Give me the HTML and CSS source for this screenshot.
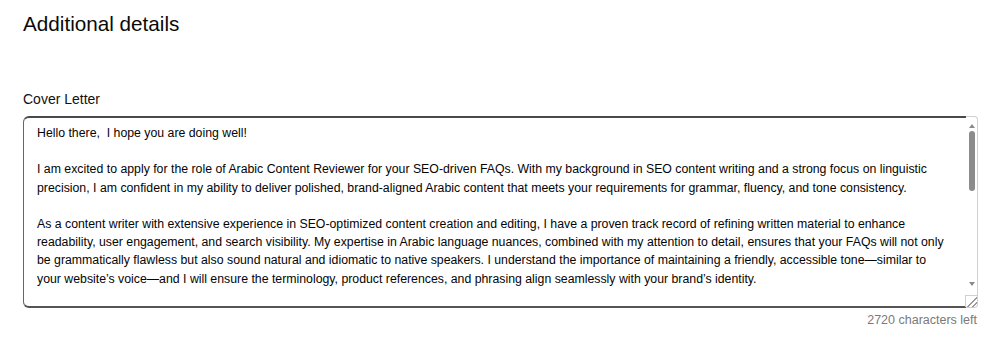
FILE: index.html
```html
<!DOCTYPE html>
<html lang="en">
<head>
<meta charset="UTF-8">
<title>Additional details</title>
<link rel="stylesheet" href="styles.css">
</head>
<body>
<section class="details">
  <h2>Additional details</h2>

  <label class="field-label" for="coverLetter">Cover Letter</label>
  <div class="editor">
    <textarea id="coverLetter" wrap="off">Hello there,  I hope you are doing well!

I am excited to apply for the role of Arabic Content Reviewer for your SEO-driven FAQs. With my background in SEO content writing and a strong focus on linguistic
precision, I am confident in my ability to deliver polished, brand-aligned Arabic content that meets your requirements for grammar, fluency, and tone consistency.

As a content writer with extensive experience in SEO-optimized content creation and editing, I have a proven track record of refining written material to enhance
readability, user engagement, and search visibility. My expertise in Arabic language nuances, combined with my attention to detail, ensures that your FAQs will not only
be grammatically flawless but also sound natural and idiomatic to native speakers. I understand the importance of maintaining a friendly, accessible tone—similar to
your website’s voice—and I will ensure the terminology, product references, and phrasing align seamlessly with your brand’s identity.

For this project, I will:
- Review and edit each FAQ for grammar, spelling, and punctuation
- Improve sentence flow and readability
- Keep terminology consistent across all answers
- Match the tone of your existing website content

I look forward to working with you.</textarea>
    <div class="scrollbar" aria-hidden="true">
      <span class="arrow up"></span>
      <span class="track"><span class="thumb"></span></span>
      <span class="arrow down"></span>
      <span class="grip"></span>
    </div>
  </div>
  <div class="counter">2720 characters left</div>
</section>
</body>
</html>
```

FILE: styles.css
```css
body{margin:0;background:#fff;color:#111;font-family:"Liberation Sans",Arial,sans-serif}
.details{padding:11px 22px 0 23px}
h2{margin:0;font-size:20.7px;font-weight:400;line-height:26px;color:#0a0a0a}
.field-label{display:block;margin-top:53px;font-size:14px;line-height:18px;color:#111}

.editor{position:relative;width:955px;height:192px;margin-top:8px}
textarea{
  display:block;box-sizing:border-box;width:100%;height:100%;margin:0;
  padding:6px 20px 0 13px;border:1px solid #666;border-top:2px solid #4a4a4a;border-bottom:2px solid #555;border-radius:6px;
  font-family:"Liberation Sans",Arial,sans-serif;font-size:12.3px;line-height:18.2px;color:#050505;
  overflow:hidden;scrollbar-width:none;resize:none;outline:none}

/* drawn scrollbar, sits over the textarea's right edge */
.scrollbar{
  position:absolute;top:0;right:0;bottom:0;width:12px;box-sizing:border-box;
  display:flex;flex-direction:column;align-items:center;
  background:#fff;border:1px solid #d0d0d0;border-left:0;border-radius:0 4px 4px 0}
.arrow{width:0;height:0;border-left:3px solid transparent;border-right:3px solid transparent}
.arrow.up{margin-top:7px;border-bottom:4px solid #8a8a8a}
.arrow.down{margin-bottom:9px;border-top:4px solid #8a8a8a}
.track{flex:1;align-self:stretch;display:flex;justify-content:center;padding-top:3px}
.thumb{width:6px;height:60px;border-radius:3px;background:#8c8c8c}
.grip{
  width:12px;height:12px;box-sizing:border-box;margin-left:-1px;
  border-top:1px solid #d0d0d0;border-left:1px solid #d0d0d0;
  background:linear-gradient(to bottom right,transparent 52%,#9a9a9a 52%,#9a9a9a 60%,transparent 60%,transparent 74%,#9a9a9a 74%,#9a9a9a 82%,transparent 82%)}

.counter{width:954px;margin-top:5px;text-align:right;font-size:12.5px;color:#7a7a7a}
```
